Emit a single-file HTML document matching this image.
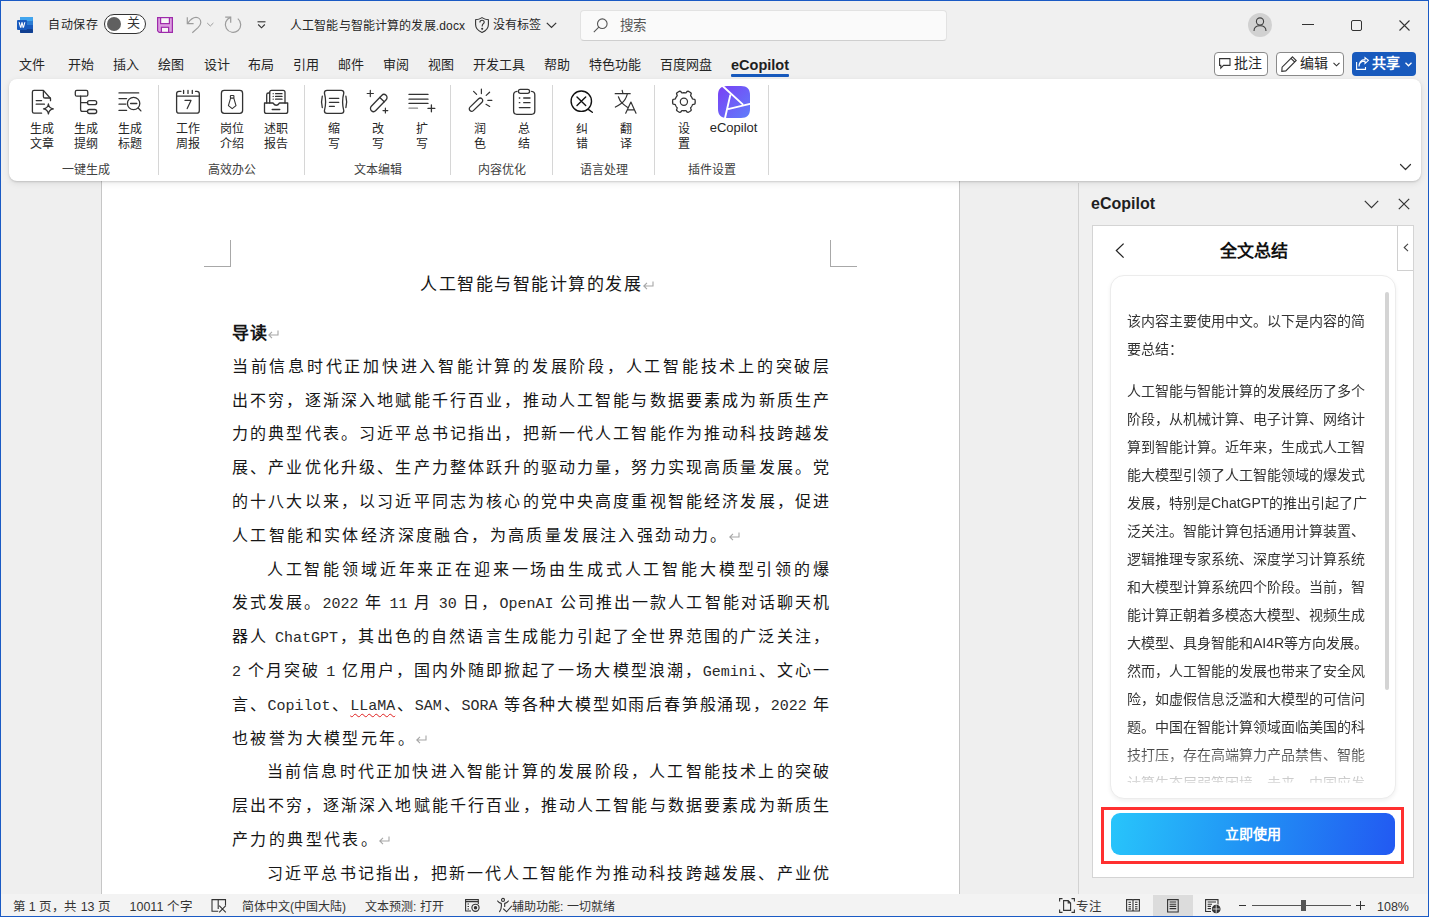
<!DOCTYPE html>
<html lang="zh-CN"><head><meta charset="utf-8">
<style>
*{box-sizing:border-box;margin:0;padding:0}
html,body{width:1429px;height:917px;overflow:hidden}
body{position:relative;background:#f0f0f0;font-family:"Liberation Sans",sans-serif;color:#262626}
.a{position:absolute;white-space:nowrap}
.ui{font-size:13px;line-height:16px;color:#262626}
svg{position:absolute;overflow:visible}
#frame{position:absolute;left:0;top:0;width:1429px;height:917px;border:1px solid #1a5ac4;border-bottom-width:1px;z-index:50;pointer-events:none}
#ribbon{position:absolute;left:9px;top:79px;width:1412px;height:102px;background:#fff;border-radius:8px;box-shadow:0 1px 2px rgba(0,0,0,.14),0 2px 7px rgba(0,0,0,.09);z-index:5}
#docarea{position:absolute;left:0px;top:181px;width:1078px;height:713px;background:#efefef;overflow:hidden}
#page{position:absolute;left:101px;top:0;width:859px;height:713px;background:#fff;border-left:1px solid #c6c6c6;border-right:1px solid #c6c6c6}
#pgc{position:absolute;left:-1px;top:0;width:858px;height:713px}
.cm{position:absolute}
.dl{position:absolute;white-space:nowrap;font-weight:300;font-size:16px;line-height:20px;color:#161616}
.dl.j{text-align:justify;text-align-last:justify;text-justify:inter-character}
.dl m{font-family:"Liberation Mono",monospace;font-weight:400;font-size:15px;color:#2a2a2a}
.dl m.w{text-decoration:underline wavy #e02020;text-decoration-thickness:1px;text-underline-offset:3px}
.pil{display:inline-block;width:11px;height:9px;vertical-align:0px;position:relative}
.pil svg{left:0;top:0}
#status{position:absolute;left:1px;top:894px;width:1427px;height:22px;background:#f3f3f3}
.doc{font-family:"Liberation Mono",monospace;font-weight:300;font-size:16px;color:#000;line-height:20px}
.gl{font-size:12px;color:#404040}
.lb{font-size:12px;line-height:14.7px;color:#262626;text-align:center;width:30px}
.pt{position:absolute;left:16px;font-size:14px;line-height:28px;color:#333;white-space:nowrap}
.st{font-size:12.5px;color:#333;line-height:16px}
.sep{position:absolute;top:85px;width:1px;height:90px;background:#d6d6d6}
</style></head>
<body>
<div id="frame"></div>

<!-- ============ TITLE BAR ============ -->
<div id="titlebar">
 <!-- word logo -->
 <svg style="left:17px;top:17px" width="16" height="16" viewBox="0 0 16 16">
  <rect x="3" y="0" width="13" height="16" rx="1" fill="#2b7cd3"/>
  <rect x="3" y="0" width="13" height="4" rx="1" fill="#41a5ee"/>
  <rect x="3" y="4" width="13" height="4" fill="#2b7cd3"/>
  <rect x="3" y="8" width="13" height="4" fill="#185abd"/>
  <rect x="3" y="12" width="13" height="4" rx="1" fill="#103f91"/>
  <rect x="0" y="3" width="10" height="10" rx="1" fill="#185abd"/>
  <path d="M1.6 5.2 L3.1 10.8 L4.4 10.8 L5 7.6 L5.6 10.8 L6.9 10.8 L8.4 5.2 L7.2 5.2 L6.3 8.9 L5.6 5.2 L4.4 5.2 L3.7 8.9 L2.8 5.2Z" fill="#fff"/>
 </svg>
 <div class="a ui" style="left:48px;top:17px;font-size:12px;letter-spacing:0.5px">自动保存</div>
 <div class="a" style="left:104px;top:14px;width:42px;height:20px;border:1px solid #333;border-radius:10px;background:#fff"></div>
 <div class="a" style="left:107px;top:17px;width:14px;height:14px;border-radius:7px;background:#606060"></div>
 <div class="a ui" style="left:127px;top:15px;font-size:13px;color:#333">关</div>
 <!-- save -->
 <svg style="left:157px;top:17px" width="16" height="16" viewBox="0 0 16 16">
  <path d="M0.6 0.6 H15.4 V15.4 H2.2 L0.6 13.8 Z" fill="#dc9de0" stroke="#9e2bab" stroke-width="1.2"/>
  <rect x="3.6" y="0.6" width="8.8" height="6" fill="#f7f7f7" stroke="#9e2bab" stroke-width="1.2"/>
  <rect x="4.4" y="10.3" width="7.2" height="5.1" fill="#f7f7f7" stroke="#9e2bab" stroke-width="1.2"/>
 </svg>
 <!-- undo / redo -->
 <svg style="left:0;top:0" width="300" height="50" viewBox="0 0 300 50" fill="none" stroke="#9c9c9c" stroke-width="1.2">
  <path d="M187.3 17.2 V23.7 H193.6"/>
  <path d="M187.8 23.2 C190.3 19.6 193 17.4 196 17.4 C198.8 17.4 200.8 19.6 200.8 22.4 C200.8 24.6 199.6 26 198 27.6 L192.3 32.8"/>
  <path d="M237.8 18.6 A7.7 7.7 0 1 1 230.4 17.4"/>
  <path d="M225.2 17.2 H230.7 V22.7"/>
  <path d="M207.2 23 L210.3 26 L213.4 23" stroke-width="1"/>
 </svg>
 <svg style="left:257px;top:21px" width="9" height="8" viewBox="0 0 9 8" fill="none" stroke="#333" stroke-width="1.1"><path d="M0.5 0.8 H8.5"/><path d="M1.2 3.5 L4.5 6.8 L7.8 3.5"/></svg>
 <div class="a ui" style="left:290px;top:18px;font-size:12px;letter-spacing:0.15px;color:#262626">人工智能与智能计算的发展.docx</div>
 <!-- shield -->
 <svg style="left:475px;top:17px" width="14" height="16" viewBox="0 0 14 16" fill="none" stroke="#333" stroke-width="1.1">
  <path d="M7 0.6 C5 2 2.8 2.6 0.6 2.7 V7.5 C0.6 11.2 3 13.8 7 15.4 C11 13.8 13.4 11.2 13.4 7.5 V2.7 C11.2 2.6 9 2 7 0.6Z"/>
  <path d="M4.9 5.4 C4.9 4 5.8 3.2 7 3.2 C8.3 3.2 9.2 4.1 9.2 5.2 C9.2 6.6 7.2 7 7.2 9 V9.5"/><circle cx="7.2" cy="11.7" r="0.5" fill="#333"/>
 </svg>
 <div class="a ui" style="left:493px;top:17px;font-size:12px">没有标签</div>
 <svg style="left:546px;top:22px" width="11" height="7" viewBox="0 0 11 7" fill="none" stroke="#333" stroke-width="1.2"><path d="M0.8 0.8 L5.5 5.5 L10.2 0.8"/></svg>
 <!-- search -->
 <div class="a" style="left:580px;top:10px;width:367px;height:31px;background:#fafafa;border:1px solid #e2e2e2;border-bottom-color:#cfcfcf;border-radius:4px"></div>
 <svg style="left:593px;top:18px" width="15" height="15" viewBox="0 0 15 15" fill="none" stroke="#555" stroke-width="1.1">
  <circle cx="9.3" cy="5.7" r="4.8"/><path d="M5.8 9.2 L0.8 14.2"/>
 </svg>
 <div class="a ui" style="left:620px;top:18px;font-size:13.5px;color:#555">搜索</div>
 <!-- avatar -->
 <div class="a" style="left:1248px;top:13px;width:24px;height:24px;border-radius:12px;background:#d1d1d1"></div>
 <svg style="left:1253px;top:17px" width="14" height="15" viewBox="0 0 14 15" fill="none" stroke="#404040" stroke-width="1.1">
  <circle cx="7" cy="4.5" r="3.6"/><path d="M1 14 C1 10.5 3.5 8.8 7 8.8 C10.5 8.8 13 10.5 13 14"/>
 </svg>
 <!-- window controls -->
 <div class="a" style="left:1302px;top:24px;width:12px;height:1px;background:#333"></div>
 <div class="a" style="left:1351px;top:20px;width:11px;height:11px;border:1px solid #333;border-radius:2px"></div>
 <svg style="left:1399px;top:20px" width="11" height="11" viewBox="0 0 11 11" fill="none" stroke="#333" stroke-width="1.1"><path d="M0.5 0.5 L10.5 10.5 M10.5 0.5 L0.5 10.5"/></svg>
</div>

<!-- ============ TABS ============ -->
<div id="tabs" style="font-size:13px;color:#262626">
 <div class="a" style="left:19px;top:54px">文件</div>
 <div class="a" style="left:68px;top:54px">开始</div>
 <div class="a" style="left:113px;top:54px">插入</div>
 <div class="a" style="left:158px;top:54px">绘图</div>
 <div class="a" style="left:204px;top:54px">设计</div>
 <div class="a" style="left:248px;top:54px">布局</div>
 <div class="a" style="left:293px;top:54px">引用</div>
 <div class="a" style="left:338px;top:54px">邮件</div>
 <div class="a" style="left:383px;top:54px">审阅</div>
 <div class="a" style="left:428px;top:54px">视图</div>
 <div class="a" style="left:473px;top:54px">开发工具</div>
 <div class="a" style="left:544px;top:54px">帮助</div>
 <div class="a" style="left:589px;top:54px">特色功能</div>
 <div class="a" style="left:660px;top:54px">百度网盘</div>
 <div class="a" style="left:731px;top:56.5px;font-size:14.5px;font-weight:700;color:#1f1f1f">eCopilot</div>
 <div class="a" style="left:731px;top:74px;width:58px;height:2.5px;background:#185abd;border-radius:1px"></div>
 <!-- right buttons -->
 <div class="a" style="left:1214px;top:52px;width:54px;height:24px;border:1px solid #8a8a8a;border-radius:4px;background:#fff"></div>
 <svg style="left:1219px;top:58px" width="12" height="11" viewBox="0 0 12 11" fill="none" stroke="#333" stroke-width="1.1"><path d="M0.6 0.6 H11 V7.4 H4.5 L1.8 10.2 V7.4 H0.6 Z"/></svg>
 <div class="a" style="left:1234px;top:52px;font-size:14px">批注</div>
 <div class="a" style="left:1276px;top:52px;width:68px;height:24px;border:1px solid #8a8a8a;border-radius:4px;background:#fff"></div>
 <svg style="left:1281px;top:56px" width="16" height="16" viewBox="0 0 16 16" fill="none" stroke="#333" stroke-width="1.1"><path d="M11.5 0.8 L15.2 4.5 L4.8 14.9 L0.8 15.3 L1.1 11.2 Z M10 2.3 L13.7 6"/></svg>
 <div class="a" style="left:1300px;top:52px;font-size:14px">编辑</div>
 <svg style="left:1333px;top:62px" width="7" height="5" viewBox="0 0 7 5" fill="none" stroke="#333" stroke-width="1.1"><path d="M0.5 0.8 L3.5 3.8 L6.5 0.8"/></svg>
 <div class="a" style="left:1352px;top:52px;width:64px;height:24px;border-radius:4px;background:#185abd"></div>
 <svg style="left:1356px;top:57px" width="13" height="13" viewBox="0 0 13 13" fill="none" stroke="#fff" stroke-width="1.1"><path d="M0.6 5 V12.4 H9.5 V10"/><path d="M3 9.5 C3 6 5.5 4.2 9 4.2 V6.6 L12.4 3.4 L9 0.6 V2.6 C4.5 2.6 3 6 3 9.5Z"/></svg>
 <div class="a" style="left:1372px;top:52px;font-size:14px;font-weight:700;color:#fff">共享</div>
 <svg style="left:1405px;top:62px" width="7" height="5" viewBox="0 0 7 5" fill="none" stroke="#fff" stroke-width="1.3"><path d="M0.5 0.8 L3.5 3.8 L6.5 0.8"/></svg>
</div>

<!-- ============ RIBBON ============ -->
<div id="ribbon"></div>
<div id="ribbonc" style="position:absolute;left:0;top:0;z-index:6">
 <div class="a lb" style="left:11.75px;top:122px;width:60px">生成<br>文章</div>
 <div class="a lb" style="left:55.85px;top:122px;width:60px">生成<br>提纲</div>
 <div class="a lb" style="left:100.10px;top:122px;width:60px">生成<br>标题</div>
 <div class="a lb" style="left:158.10px;top:122px;width:60px">工作<br>周报</div>
 <div class="a lb" style="left:202.00px;top:122px;width:60px">岗位<br>介绍</div>
 <div class="a lb" style="left:246.00px;top:122px;width:60px">述职<br>报告</div>
 <div class="a lb" style="left:304.15px;top:122px;width:60px">缩<br>写</div>
 <div class="a lb" style="left:348.00px;top:122px;width:60px">改<br>写</div>
 <div class="a lb" style="left:392.00px;top:122px;width:60px">扩<br>写</div>
 <div class="a lb" style="left:449.90px;top:122px;width:60px">润<br>色</div>
 <div class="a lb" style="left:494.00px;top:122px;width:60px">总<br>结</div>
 <div class="a lb" style="left:551.65px;top:122px;width:60px">纠<br>错</div>
 <div class="a lb" style="left:595.65px;top:122px;width:60px">翻<br>译</div>
 <div class="a lb" style="left:653.85px;top:122px;width:60px">设<br>置</div>
 <div class="a lb" style="left:703.55px;top:120.5px;width:60px;font-size:13px">eCopilot</div>
 <div class="a gl" style="left:45.85px;top:160px;width:80px;text-align:center">一键生成</div>
 <div class="a gl" style="left:192.00px;top:160px;width:80px;text-align:center">高效办公</div>
 <div class="a gl" style="left:337.80px;top:160px;width:80px;text-align:center">文本编辑</div>
 <div class="a gl" style="left:462.25px;top:160px;width:80px;text-align:center">内容优化</div>
 <div class="a gl" style="left:563.90px;top:160px;width:80px;text-align:center">语言处理</div>
 <div class="a gl" style="left:671.90px;top:160px;width:80px;text-align:center">插件设置</div>
 <div class="sep" style="left:158px"></div>
 <div class="sep" style="left:304px"></div>
 <div class="sep" style="left:450px"></div>
 <div class="sep" style="left:552px"></div>
 <div class="sep" style="left:654px"></div>
 <div class="sep" style="left:768px"></div>
 <svg style="left:0;top:0" width="1429" height="200" viewBox="0 0 1429 200" fill="none" stroke="#333" stroke-width="1.3" stroke-linecap="round" stroke-linejoin="round">
  <!-- 生成文章 -->
  <path d="M41.6 113.2 H34 Q32.4 113.2 32.4 111.6 V92 Q32.4 90.4 34 90.4 H43.4 L50.5 98.5 V100.7"/>
  <path d="M43.4 90.6 V96.4 Q43.4 98 45 98 H50.3"/>
  <path d="M36.2 100.6 H41.6 M36.2 104.2 H44.4"/>
  <path d="M48.4 104 Q49 108.2 53.3 108.8 Q49 109.4 48.4 113.8 Q47.8 109.4 43.5 108.8 Q47.8 108.2 48.4 104 Z"/>
  <!-- 生成提纲 -->
  <rect x="75.3" y="90.4" width="12.5" height="5.8" rx="1.5"/>
  <path d="M80.6 96.2 V109.5 Q80.6 111.4 82.5 111.4 H87.5 M80.6 102.7 H87.5"/>
  <rect x="87.5" y="100.7" width="9.2" height="4" rx="2"/>
  <rect x="87.5" y="109.5" width="9.2" height="4" rx="2"/>
  <!-- 生成标题 -->
  <path d="M119 92.9 H138.7 M119 98.6 H126.6 M119 104.2 H125.8 M119 110.4 H126.6"/>
  <circle cx="133.6" cy="103.5" r="6.2"/>
  <path d="M130.6 103.5 H136.8 M138.2 108 L140.9 110.9"/>
  <!-- 工作周报 -->
  <path d="M181 91.3 H179 Q176.6 91.3 176.6 93.8 V110.7 Q176.6 113.2 179 113.2 H196.8 Q199.3 113.2 199.3 110.7 V93.8 Q199.3 91.3 196.8 91.3 H195.5"/>
  <path d="M176.6 96.2 H199.3 M183.6 90.4 V93.4 M188 90.4 V93.4 M192.3 90.4 V93.4"/>
  <path d="M185 100.4 H191 L187.2 108.6" stroke-width="1.2"/>
  <!-- 岗位介绍 -->
  <rect x="221.4" y="90.4" width="21.2" height="23" rx="2.8"/>
  <rect x="230.4" y="95.5" width="3.5" height="2.6" rx="0.6" stroke-width="1.1"/>
  <path d="M230.6 98.2 L228.4 105.6 L232.2 108.6 L236 105.6 L233.8 98.2" stroke-width="1.1"/>
  <!-- 述职报告 -->
  <path d="M264.5 103 H273 Q276.3 107.5 279.5 103 H287.7 V111.4 Q287.7 113.4 285.7 113.4 H266.5 Q264.5 113.4 264.5 111.4 Z"/>
  <path d="M266.7 103 V94.8 Q266.7 93 268.5 93 H269.7"/>
  <path d="M269.7 103 V92.3 Q269.7 90.4 271.6 90.4 H283.1 Q285 90.4 285 92.3 V103"/>
  <path d="M273.2 93.7 V93.6 M273.2 96.4 V96.3 M273.2 99.2 V99.1 M275.6 93.7 H282 M275.6 96.4 H282 M275.6 99.2 H282 M272.2 109.5 H279.8"/>
  <!-- 缩写 -->
  <path d="M327 90.4 H341.2 Q343.8 90.4 343.8 93 Q341.4 102 343.8 110.8 Q343.8 113.4 341.2 113.4 H327 Q324.4 113.4 324.4 110.8 Q326.8 102 324.4 93 Q324.4 90.4 327 90.4 Z"/>
  <path d="M329.4 98.3 H338.8 M329.4 102.3 H338.8 M329.4 106.3 H334.4"/>
  <path d="M322.3 96.2 Q320.8 102 322.3 107.6 M345.9 96.2 Q347.4 102 345.9 107.6"/>
  <!-- 改写 -->
  <g transform="translate(378.75 103) rotate(-46.3)"><rect x="-10.6" y="-3.1" width="21.2" height="6.2" rx="3.1"/><path d="M4.7 -3.1 V3.1"/></g>
  <path d="M370.3 90.4 V96.6 M367.2 93.5 H373.4 M385.4 108.2 V113 M383 110.6 H387.8" stroke-width="1.2"/>
  <!-- 扩写 -->
  <path d="M409 94.4 H428 M409 99.2 H428 M409 103.4 H428"/>
  <path d="M409 108.2 H417.5" stroke="#888"/>
  <path d="M431.4 105 V111.8 M428 108.4 H434.8"/>
  <!-- 润色 -->
  <g transform="translate(476 104.7) rotate(-44)"><rect x="-8.4" y="-2.4" width="16.8" height="4.8" rx="2.4"/></g>
  <path d="M481.4 89 V93.6 M473.6 91.3 L476.6 94.3 M486.2 95.4 L489.6 92.2 M487.8 100.3 H491.9 M486 104.3 L489.7 106.4" stroke-width="1.2"/>
  <!-- 总结 -->
  <path d="M517 91.3 Q513.6 91.6 513.6 94.8 V111.1 Q513.6 114.3 516.8 114.3 H531.6 Q534.8 114.3 534.8 111.1 V94.8 Q534.8 91.6 531.6 91.3"/>
  <rect x="518.4" y="89.3" width="11.2" height="4" rx="2"/>
  <path d="M519.3 98 H519.8 M519.3 102.7 H519.8 M523.7 98 H530 M523.7 102.7 H530 M519.3 107.6 H530"/>
  <!-- 纠错 -->
  <circle cx="581.3" cy="101.2" r="10.2" stroke="#111" stroke-width="1.4"/>
  <path d="M577 97.1 L585.7 105.4 M585.7 97.1 L577 105.4 M588.6 109.6 L592.3 112.3" stroke="#111" stroke-width="1.4"/>
  <!-- 翻译 -->
  <path d="M622.2 90.4 L622.9 93.3 M615.2 93.7 H630.2 M627.3 94.2 Q625.5 100.5 621.9 102.9 Q619 105 615.4 107.1 M618.4 96.8 Q619.8 101 621.9 102.9 Q624 105 627.4 107.3" stroke-width="1.2"/>
  <path d="M625.7 113.2 L630.9 102 L636 113.2 M627.2 109.9 H634.5" stroke-width="1.2"/>
  <!-- 设置 gear -->
  <path d="M695.20 101.75 L695.18 102.34 L695.14 102.93 L695.06 103.52 L694.66 104.04 L693.41 104.30 L692.47 104.54 L692.30 104.98 L692.12 105.41 L691.92 105.84 L691.69 106.25 L691.45 106.65 L691.18 107.04 L690.89 107.41 L690.60 107.78 L690.86 108.71 L691.26 109.93 L691.01 110.53 L690.54 110.89 L690.05 111.23 L689.55 111.54 L689.03 111.82 L688.50 112.07 L687.95 112.30 L687.30 112.22 L686.45 111.26 L685.77 110.57 L685.31 110.64 L684.84 110.70 L684.37 110.74 L683.90 110.75 L683.43 110.74 L682.96 110.70 L682.49 110.64 L682.03 110.57 L681.35 111.26 L680.50 112.22 L679.85 112.30 L679.30 112.07 L678.77 111.82 L678.25 111.54 L677.75 111.23 L677.26 110.89 L676.79 110.53 L676.54 109.93 L676.94 108.71 L677.20 107.78 L676.91 107.41 L676.62 107.04 L676.35 106.65 L676.11 106.25 L675.88 105.84 L675.68 105.41 L675.50 104.98 L675.33 104.54 L674.39 104.30 L673.14 104.04 L672.74 103.52 L672.66 102.93 L672.62 102.34 L672.60 101.75 L672.62 101.16 L672.66 100.57 L672.74 99.98 L673.14 99.46 L674.39 99.20 L675.33 98.96 L675.50 98.52 L675.68 98.09 L675.88 97.66 L676.11 97.25 L676.35 96.85 L676.62 96.46 L676.91 96.09 L677.20 95.72 L676.94 94.79 L676.54 93.57 L676.79 92.97 L677.26 92.61 L677.75 92.27 L678.25 91.96 L678.77 91.68 L679.30 91.43 L679.85 91.20 L680.50 91.28 L681.35 92.24 L682.03 92.93 L682.49 92.86 L682.96 92.80 L683.43 92.76 L683.90 92.75 L684.37 92.76 L684.84 92.80 L685.31 92.86 L685.77 92.93 L686.45 92.24 L687.30 91.28 L687.95 91.20 L688.50 91.43 L689.03 91.68 L689.55 91.96 L690.05 92.27 L690.54 92.61 L691.01 92.97 L691.26 93.57 L690.86 94.79 L690.60 95.72 L690.89 96.09 L691.18 96.46 L691.45 96.85 L691.69 97.25 L691.92 97.66 L692.12 98.09 L692.30 98.52 L692.47 98.96 L693.41 99.20 L694.66 99.46 L695.06 99.98 L695.14 100.57 L695.18 101.16 Z" stroke-width="1.3"/>
  <circle cx="683.9" cy="101.75" r="3.6" stroke-width="1.2"/>
  <!-- collapse chevron -->
  <path d="M1400.5 164.5 L1405.5 169.5 L1410.5 164.5" stroke-width="1.2"/>
 </svg>
 <svg style="left:718px;top:86px" width="32" height="32" viewBox="0 0 32 32">
  <defs><linearGradient id="lg1" x1="0" y1="0" x2="1" y2="1"><stop offset="0" stop-color="#7a3ff5"/><stop offset="1" stop-color="#5f7efa"/></linearGradient></defs>
  <path d="M9 0 H23 C29 0 32 3 32 9 V23 C32 29 29 32 23 32 H9 C3 32 0 29 0 23 V9 C0 3 3 0 9 0Z" fill="url(#lg1)"/>
  <path d="M3.5 -1 L25 18.6 M12.4 8.6 L6.8 33 M10 23.2 L33 17.6" stroke="#fff" stroke-width="1.9" fill="none"/>
 </svg>
</div>

<!-- ============ DOC AREA ============ -->
<div id="docarea">
  <div id="page"><div id="pgc">
  <div class="cm" style="left:103px;top:59px;width:27px;height:27px;border-right:1px solid #a8a8a8;border-bottom:1px solid #a8a8a8"></div>
  <div class="cm" style="left:729px;top:59px;width:27px;height:27px;border-left:1px solid #a8a8a8;border-bottom:1px solid #a8a8a8"></div>
  <div class="dl" style="left:319px;top:94px;letter-spacing:1.5px;font-size:17px">人工智能与智能计算的发展<span class="pil" style="margin-left:1px"><svg width="11" height="9"><path d="M10 0.5 V5 H1 M4 1.8 L0.8 5 L4 8.2" fill="none" stroke="#a6a6a6" stroke-width="1.1"/></svg></span></div>
  <div class="dl" style="left:130.5px;top:143px;font-weight:700;font-size:17px;letter-spacing:1px">导读<span class="pil"><svg width="11" height="9"><path d="M10 0.5 V5 H1 M4 1.8 L0.8 5 L4 8.2" fill="none" stroke="#a6a6a6" stroke-width="1.1"/></svg></span></div>
  <div class="dl j" style="left:131.00px;top:175.90px;width:597.00px">当前信息时代正加快进入智能计算的发展阶段，人工智能技术上的突破层</div>
  <div class="dl j" style="left:131.00px;top:209.69px;width:597.00px">出不穷，逐渐深入地赋能千行百业，推动人工智能与数据要素成为新质生产</div>
  <div class="dl j" style="left:131.00px;top:243.48px;width:597.00px">力的典型代表。习近平总书记指出，把新一代人工智能作为推动科技跨越发</div>
  <div class="dl j" style="left:131.00px;top:277.27px;width:597.00px">展、产业优化升级、生产力整体跃升的驱动力量，努力实现高质量发展。党</div>
  <div class="dl j" style="left:131.00px;top:311.06px;width:597.00px">的十八大以来，以习近平同志为核心的党中央高度重视智能经济发展，促进</div>
  <div class="dl" style="left:131.00px;top:344.85px;width:597.00px;letter-spacing:2.4px">人工智能和实体经济深度融合，为高质量发展注入强劲动力。<span class="pil"><svg width="11" height="9"><path d="M10 0.5 V5 H1 M4 1.8 L0.8 5 L4 8.2" fill="none" stroke="#a6a6a6" stroke-width="1.1"/></svg></span></div>
  <div class="dl j" style="left:165.80px;top:378.64px;width:562.20px">人工智能领域近年来正在迎来一场由生成式人工智能大模型引领的爆</div>
  <div class="dl j" style="left:131.00px;top:412.43px;width:597.00px">发式发展。<m>2022</m> 年 <m>11</m> 月 <m>30</m> 日，<m>OpenAI</m> 公司推出一款人工智能对话聊天机</div>
  <div class="dl j" style="left:131.00px;top:446.22px;width:597.00px">器人 <m>ChatGPT</m>，其出色的自然语言生成能力引起了全世界范围的广泛关注，</div>
  <div class="dl j" style="left:131.00px;top:480.01px;width:597.00px"><m>2</m> 个月突破 <m>1</m> 亿用户，国内外随即掀起了一场大模型浪潮，<m>Gemini</m>、文心一</div>
  <div class="dl j" style="left:131.00px;top:513.80px;width:597.00px">言、<m>Copilot</m>、<m class=w>LLaMA</m>、<m>SAM</m>、<m>SORA</m> 等各种大模型如雨后春笋般涌现，<m>2022</m> 年</div>
  <div class="dl" style="left:131.00px;top:547.59px;width:597.00px;letter-spacing:2.4px">也被誉为大模型元年。<span class="pil"><svg width="11" height="9"><path d="M10 0.5 V5 H1 M4 1.8 L0.8 5 L4 8.2" fill="none" stroke="#a6a6a6" stroke-width="1.1"/></svg></span></div>
  <div class="dl j" style="left:165.80px;top:581.38px;width:562.20px">当前信息时代正加快进入智能计算的发展阶段，人工智能技术上的突破</div>
  <div class="dl j" style="left:131.00px;top:615.17px;width:597.00px">层出不穷，逐渐深入地赋能千行百业，推动人工智能与数据要素成为新质生</div>
  <div class="dl" style="left:131.00px;top:648.96px;width:597.00px;letter-spacing:2.4px">产力的典型代表。<span class="pil"><svg width="11" height="9"><path d="M10 0.5 V5 H1 M4 1.8 L0.8 5 L4 8.2" fill="none" stroke="#a6a6a6" stroke-width="1.1"/></svg></span></div>
  <div class="dl j" style="left:165.80px;top:682.75px;width:562.20px">习近平总书记指出，把新一代人工智能作为推动科技跨越发展、产业优</div>
  </div>
</div></div>

<!-- ============ SIDE PANEL ============ -->
<div id="panel">
 <div class="a" style="left:1078px;top:183px;width:1px;height:711px;background:#d2d2d2"></div>
 <div class="a" style="left:1091px;top:194.5px;font-size:16px;font-weight:700;color:#1f1f1f">eCopilot</div>
 <svg style="left:1364px;top:200px" width="15" height="9" viewBox="0 0 15 9" fill="none" stroke="#333" stroke-width="1.2"><path d="M0.8 0.8 L7.5 7.6 L14.2 0.8"/></svg>
 <svg style="left:1398px;top:198px" width="12" height="12" viewBox="0 0 12 12" fill="none" stroke="#333" stroke-width="1.2"><path d="M0.8 0.8 L11.2 11.2 M11.2 0.8 L0.8 11.2"/></svg>
 <div class="a" style="left:1092px;top:225px;width:322px;height:653px;background:#fff;border:1px solid #d4d4d4"></div>
 <div class="a" style="left:1397px;top:226px;width:16px;height:45px;background:#fff;border-left:1px solid #d0d0d0;border-bottom:1px solid #d0d0d0"></div>
 <svg style="left:1403px;top:243px" width="6" height="9" viewBox="0 0 6 9" fill="none" stroke="#444" stroke-width="1.1"><path d="M5 0.8 L1.2 4.5 L5 8.2"/></svg>
 <svg style="left:1115px;top:243px" width="10" height="16" viewBox="0 0 10 16" fill="none" stroke="#222" stroke-width="1.3"><path d="M8.6 0.6 L1.4 7.6 L8.6 14.6"/></svg>
 <div class="a" style="left:1219.5px;top:237px;font-size:17px;font-weight:700;color:#111">全文总结</div>
 <div class="a" style="left:1110px;top:275px;width:286px;height:524px;background:#fff;border:1px solid #ececec;border-radius:14px;box-shadow:0 2px 4px rgba(0,0,0,.06)"></div>
 <div class="a" style="left:1111px;top:290px;width:270px;height:493px;overflow:hidden;-webkit-mask-image:linear-gradient(to bottom,#000 0,#000 455px,rgba(0,0,0,.15) 493px)">
  <div class="pt" style="top:17px">该内容主要使用中文。以下是内容的简<br>要总结：</div>
  <div class="pt" style="top:87px">人工智能与智能计算的发展经历了多个<br>阶段，从机械计算、电子计算、网络计<br>算到智能计算。近年来，生成式人工智<br>能大模型引领了人工智能领域的爆发式<br>发展，特别是ChatGPT的推出引起了广<br>泛关注。智能计算包括通用计算装置、<br>逻辑推理专家系统、深度学习计算系统<br>和大模型计算系统四个阶段。当前，智<br>能计算正朝着多模态大模型、视频生成<br>大模型、具身智能和AI4R等方向发展。<br>然而，人工智能的发展也带来了安全风<br>险，如虚假信息泛滥和大模型的可信问<br>题。中国在智能计算领域面临美国的科<br>技打压，存在高端算力产品禁售、智能<br>计算生态层弱等困境。未来，中国应发</div>
 </div>
 <div class="a" style="left:1385px;top:292px;width:4px;height:398px;background:#d4d4d4;border-radius:2px"></div>
 <div class="a" style="left:1101px;top:807px;width:303px;height:57px;border:3px solid #ff3030"></div>
 <div class="a" style="left:1111px;top:813px;width:284px;height:42px;border-radius:9px;background:linear-gradient(100deg,#28c5fb 0%,#2196f5 45%,#2259f2 100%)"></div>
 <div class="a" style="left:1111px;top:823px;width:284px;text-align:center;font-size:14px;font-weight:700;color:#fff">立即使用</div>
</div>

<!-- ============ STATUS BAR ============ -->
<div id="status">
 <div class="a st" style="left:11.5px;top:4.5px;letter-spacing:-0.15px">第 1 页，共 13 页</div>
 <div class="a st" style="left:128.5px;top:4.5px">10011 个字</div>
 <svg style="left:210px;top:5px" width="16" height="14" viewBox="0 0 16 14" fill="none" stroke="#333" stroke-width="1.1"><path d="M7.2 12.3 H1 V0.6 H14.5 V6.5 M7.2 0.6 V10"/><path d="M8.2 6.6 L14.8 13.3 M14.8 6.6 L8.2 13.3"/></svg>
 <div class="a st" style="left:241px;top:5px;font-size:12px">简体中文(中国大陆)</div>
 <div class="a st" style="left:364px;top:5px;font-size:12px">文本预测: 打开</div>
 <svg style="left:464px;top:5px" width="15" height="13" viewBox="0 0 15 13" fill="none" stroke="#333" stroke-width="1.1"><path d="M6 12 H0.6 V0.6 H13.3 V5"/><path d="M0.6 2.6 H13.3 M2.5 5 H4 M2.5 7.5 H4 M2.5 10 H4"/><circle cx="10.5" cy="8.8" r="3.6"/><circle cx="10.5" cy="8.8" r="1.2" fill="#333"/></svg>
 <svg style="left:496px;top:4px" width="16" height="15" viewBox="0 0 16 15" fill="none" stroke="#333" stroke-width="1.1" stroke-linecap="round"><circle cx="6" cy="1.9" r="1.5"/><path d="M0.6 3 C2 5 3.5 5.2 4.3 5.4 C4.6 8 4.5 11 2.6 13.6 M11.4 3 C10 5 8.5 5.2 7.7 5.4 V8.5 M6.6 11 L9.6 13.8 L14.6 8.2"/></svg>
 <div class="a st" style="left:511px;top:5px;font-size:12px">辅助功能: 一切就绪</div>
 <svg style="left:1058px;top:4px" width="16" height="15" viewBox="0 0 16 15" fill="none" stroke="#333" stroke-width="1.1"><path d="M0.6 3.5 V0.6 H3.5 M12.5 0.6 H15.4 V3.5 M15.4 11.5 V14.4 H12.5 M3.5 14.4 H0.6 V11.5"/><path d="M4.6 2.6 H9.2 L11.6 5 V12.4 H4.6 Z M9.2 2.6 V5 H11.6"/></svg>
 <div class="a st" style="left:1075px;top:5px;font-size:12.5px">专注</div>
 <svg style="left:1125px;top:5px" width="14" height="13" viewBox="0 0 14 13" fill="none" stroke="#333" stroke-width="1.1"><path d="M0.6 0.6 H6.2 Q7 0.6 7 1.5 Q7 0.6 7.8 0.6 H13.4 V12 H7.8 Q7 12 7 12.6 Q7 12 6.2 12 H0.6 Z M7 1.5 V12"/><path d="M2.5 3.3 H5 M2.5 5.5 H5 M2.5 7.7 H5 M2.5 9.9 H5 M9 3.3 H11.5 M9 5.5 H11.5 M9 7.7 H11.5 M9 9.9 H11.5"/></svg>
 <div class="a" style="left:1152px;top:1px;width:40px;height:21px;background:#dcdcdc"></div>
 <svg style="left:1166px;top:5px" width="12" height="14" viewBox="0 0 12 14" fill="none" stroke="#333" stroke-width="1.1"><path d="M0.6 0.6 H11.2 V13 H0.6 Z"/><path d="M2.6 3 H9.2 M2.6 5.2 H9.2 M2.6 7.4 H9.2 M2.6 9.6 H9.2"/></svg>
 <svg style="left:1204px;top:5px" width="16" height="14" viewBox="0 0 16 14" fill="none" stroke="#333" stroke-width="1.1"><path d="M6 12.5 H0.6 V0.6 H13 V5.5"/><path d="M2.6 3 H11 M2.6 5.2 H7 M2.6 7.4 H6 M2.6 9.6 H6"/><circle cx="11.2" cy="10" r="3.8" fill="#333"/><path d="M7.6 10 H14.8 M11.2 6.3 V13.7" stroke="#f3f3f3" stroke-width="0.8"/></svg>
 <div class="a" style="left:1238px;top:11px;width:7px;height:1px;background:#333"></div>
 <div class="a" style="left:1251px;top:11px;width:99px;height:1px;background:#555"></div>
 <div class="a" style="left:1300px;top:6px;width:5px;height:11px;background:#555"></div>
 <div class="a" style="left:1355px;top:11px;width:9px;height:1px;background:#333"></div>
 <div class="a" style="left:1359px;top:7px;width:1px;height:9px;background:#333"></div>
 <div class="a st" style="left:1376px;top:5px;font-size:12.5px">108%</div>
</div>
</body></html>
